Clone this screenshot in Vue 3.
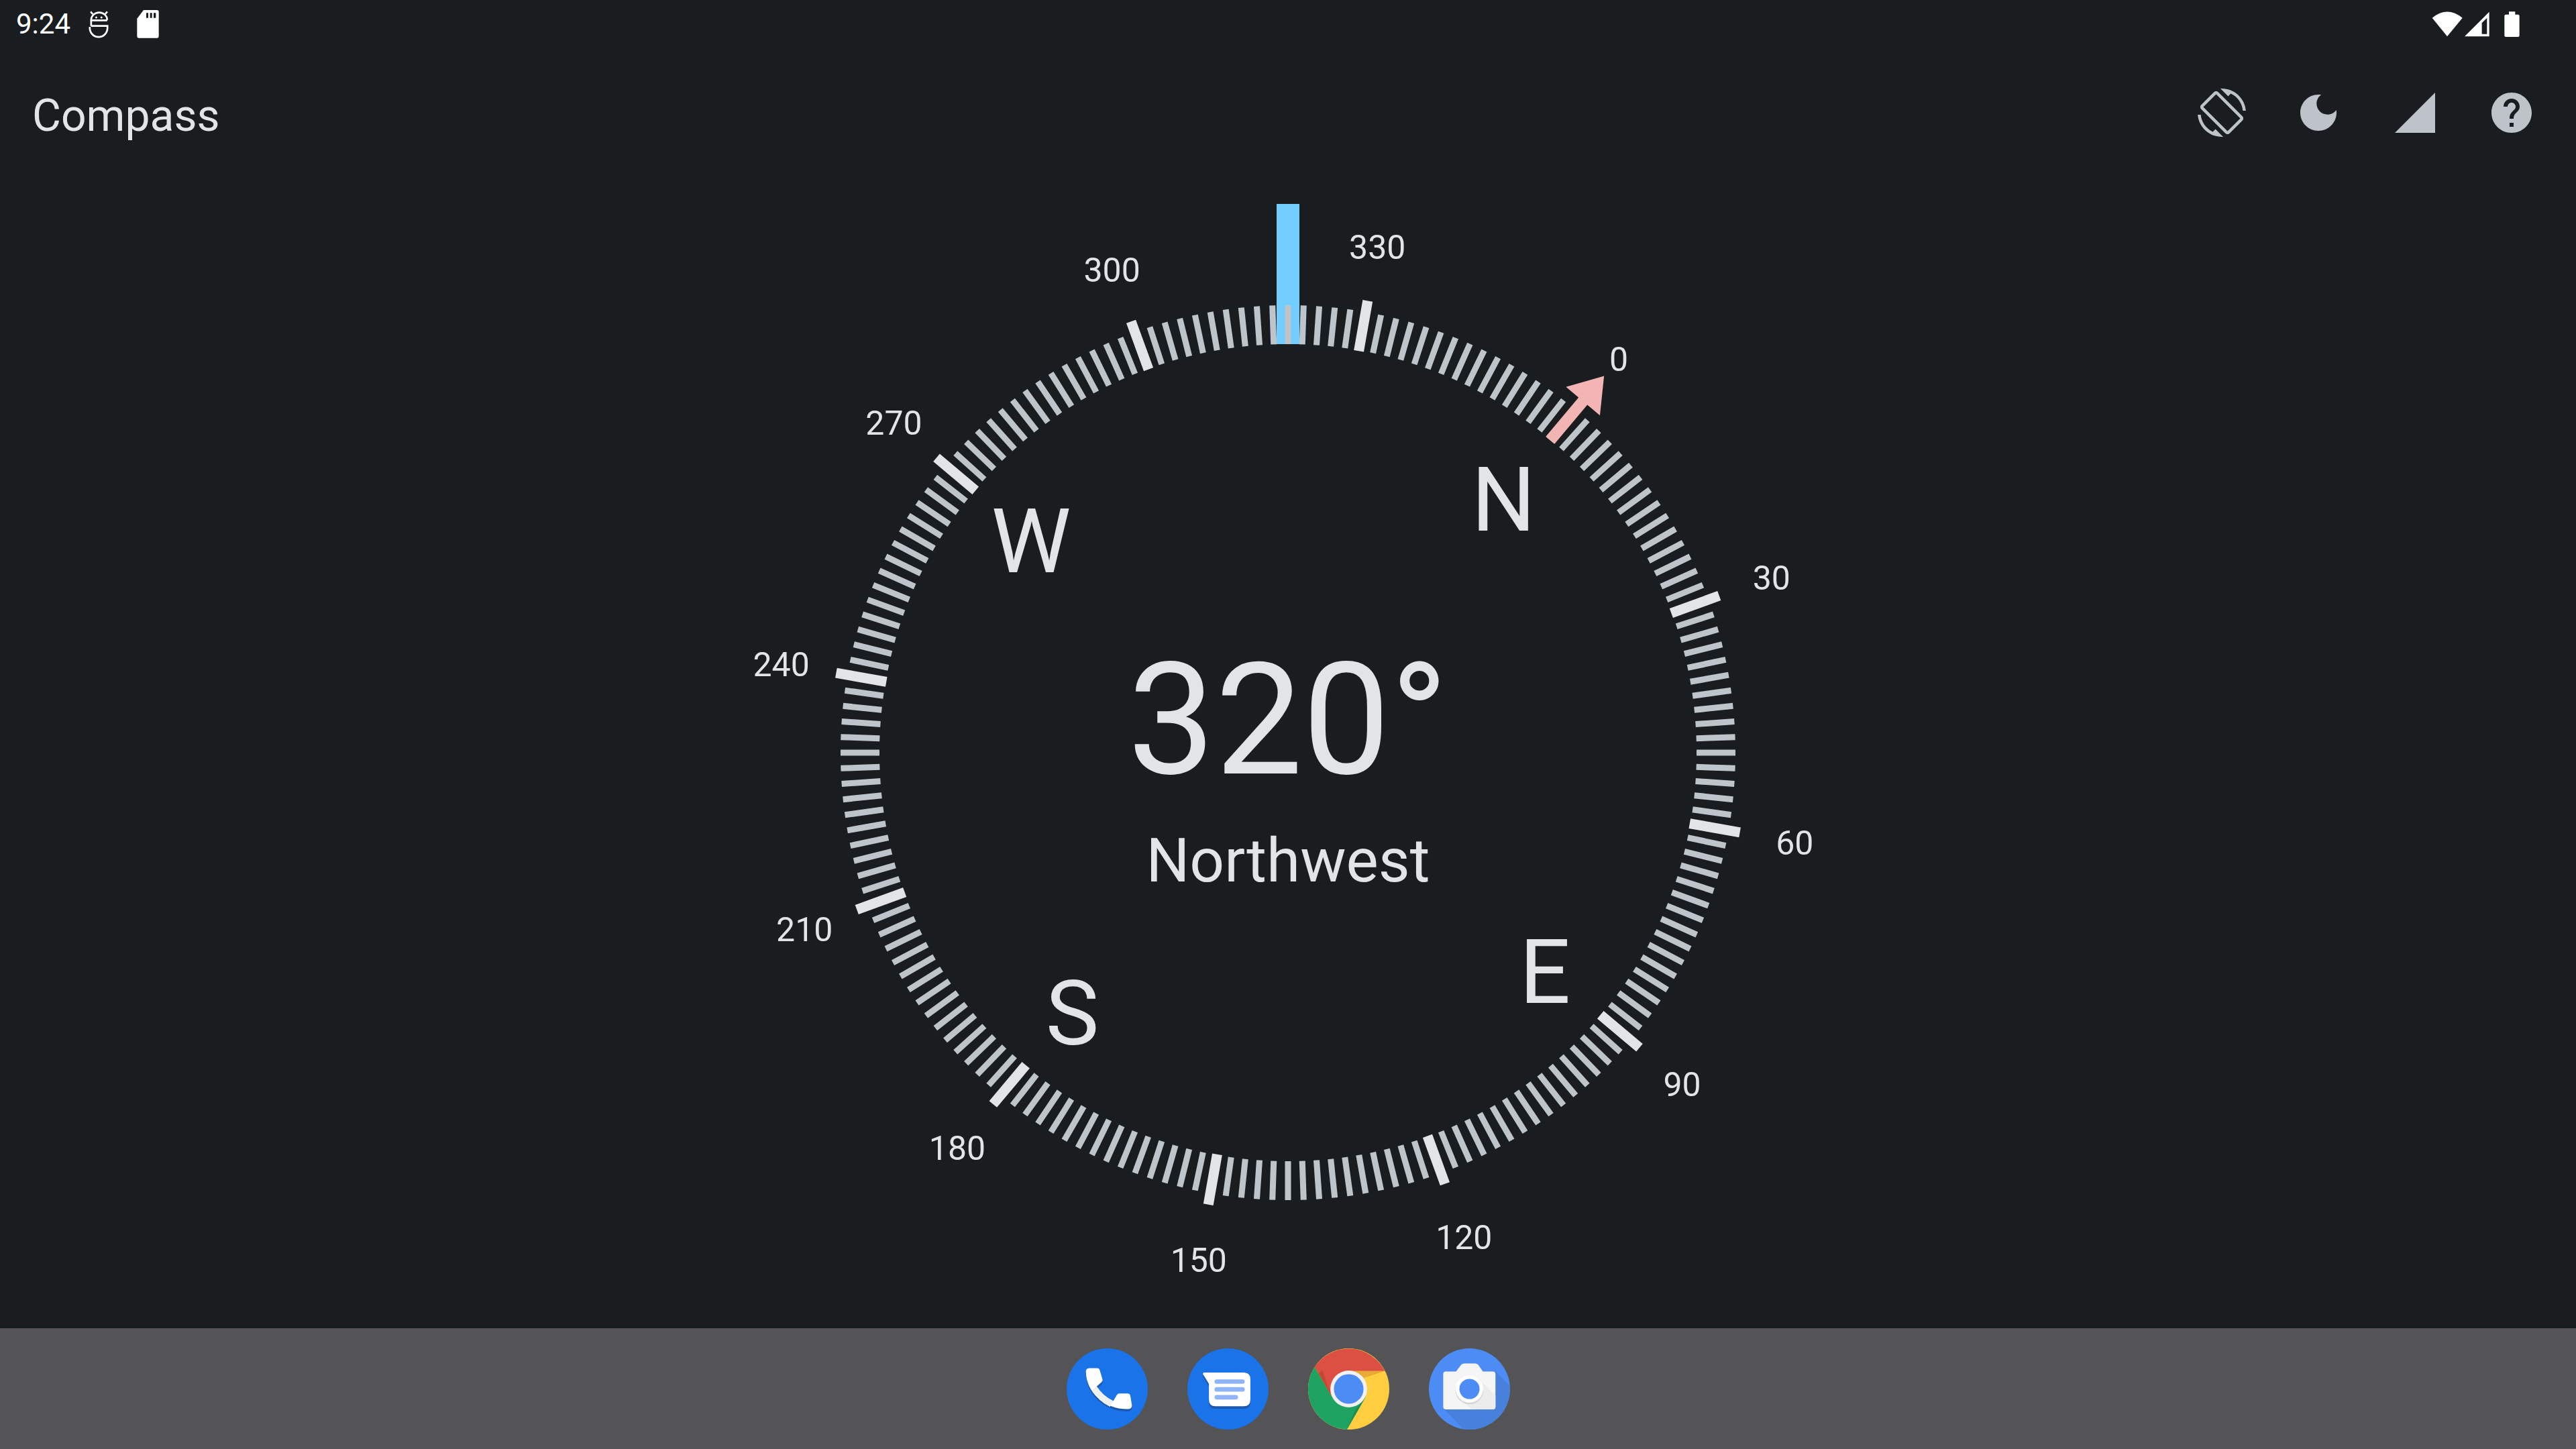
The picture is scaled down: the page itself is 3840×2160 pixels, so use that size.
<script setup>
import { computed } from 'vue'

const heading = 320
const toScreen = (deg) => deg - heading

const ticks = computed(() => {
  const list = []
  for (let d = 0; d < 360; d += 2) {
    const major = d % 30 === 0
    list.push({ deg: d, major, angle: toScreen(d) })
  }
  return list
})

function polar(deg, r) {
  const a = (toScreen(deg) * Math.PI) / 180
  return { x: Math.sin(a) * r, y: -Math.cos(a) * r }
}

const labels = computed(() => {
  const list = []
  for (let d = 0; d < 360; d += 30) {
    const p = polar(d, 767)
    list.push({ text: String(d), x: p.x, y: p.y + 19 })
  }
  return list
})

const letters = computed(() =>
  [['N', 0], ['E', 90], ['S', 180], ['W', 270]].map(([text, d]) => {
    const p = polar(d, 500)
    return { text, x: p.x, y: p.y + 52 }
  })
)
</script>

<template>
  <div class="screen">
    <header class="status">
      <div class="status-left">
        <span class="time">9:24</span>
        <svg class="bug" viewBox="24 24 92 126" fill="none" stroke="#fff" stroke-width="8">
          <path d="M107 70H35M35 95V68A36 33 0 0 1 107 68M35 95H108V104A39 40 0 0 1 29 104V99M33 31l9 11M107 31l-9 11" />
          <circle cx="58" cy="57" r="4.5" fill="#fff" stroke="none" />
          <circle cx="81" cy="57" r="4.5" fill="#fff" stroke="none" />
        </svg>
        <svg class="sd" viewBox="235 22 99 126">
          <path fill="#fff" d="M265 22H325Q333 22 333 30V138Q333 147 325 147H244Q236 147 236 138V60Z" />
          <path fill="#1a1d20" d="M277 35h9v22h-9zM294 35h9v22h-9zM310 35h10v22h-10z" />
        </svg>
      </div>
      <div class="status-right">
        <svg class="wifi" viewBox="28 26 140 114">
          <path fill="#fff" d="M30 55Q97 0 165 55L97 138Z" />
        </svg>
        <svg class="cell" viewBox="178 26 112 114">
          <path fill="#fff" fill-rule="evenodd" d="M178 138L288 28V138ZM255 78V127H278V55Z" />
        </svg>
        <svg class="battery" viewBox="354 24 70 116">
          <path fill="#fff" d="M375 25H403V38H416Q422 38 422 44V132Q422 138 416 138H361Q355 138 355 132V44Q355 38 361 38H375Z" />
        </svg>
      </div>
    </header>

    <div class="toolbar">
      <div class="title">Compass</div>
      <div class="actions">
        <div class="action">
          <svg viewBox="0 0 24 24"><path d="M16.48 2.52c3.27 1.55 5.61 4.72 5.97 8.48h1.5C23.44 4.84 18.29 0 12 0l-.66.03 3.81 3.81 1.33-1.32zm-6.25-.77c-.59-.59-1.54-.59-2.12 0L1.75 8.11c-.59.59-.59 1.54 0 2.12l12.02 12.02c.59.59 1.54.59 2.12 0l6.36-6.36c.59-.59.59-1.54 0-2.12L10.23 1.75zm4.6 19.44L2.81 9.17l6.36-6.36 12.02 12.02-6.36 6.36zm-7.31.29C4.25 19.94 1.91 16.76 1.55 13H.05C.56 19.16 5.71 24 12 24l.66-.03-3.81-3.81-1.33 1.32z" /></svg>
        </div>
        <div class="action">
          <svg viewBox="0 0 24 24"><path d="M12 3c-4.97 0-9 4.03-9 9s4.03 9 9 9 9-4.03 9-9c0-.46-.04-.92-.1-1.36-.98 1.37-2.58 2.26-4.4 2.26-2.98 0-5.4-2.42-5.4-5.4 0-1.81.89-3.42 2.26-4.4-.44-.06-.9-.1-1.36-.1z" /></svg>
        </div>
        <div class="action">
          <svg viewBox="0 0 24 24"><path d="M2 22h20V2z" /></svg>
        </div>
        <div class="action">
          <svg viewBox="0 0 24 24"><path d="M12 2C6.48 2 2 6.48 2 12s4.48 10 10 10 10-4.48 10-10S17.52 2 12 2zm1 17h-2v-2h2v2zm2.07-7.75l-.9.92C13.45 12.9 13 13.5 13 15h-2v-.5c0-1.1.45-2.1 1.17-2.83l1.24-1.26c.37-.36.59-.86.59-1.41 0-1.1-.9-2-2-2s-2 .9-2 2H8c0-2.21 1.79-4 4-4s4 1.79 4 4c0 .88-.36 1.68-.93 2.25z" /></svg>
        </div>
      </div>
    </div>

    <main class="main">
      <svg class="dial" viewBox="-858 -858 1716 1716">
        <rect x="-17" y="-818" width="34" height="209" fill="#73cdff" />
        <rect
          v-for="t in ticks"
          :key="t.deg"
          :x="t.major ? -7.5 : -4.5"
          :y="t.major ? -684 : -667"
          :width="t.major ? 15 : 9"
          :height="t.major ? 76 : 58"
          :fill="t.major ? '#e3e4e6' : '#bdc5cb'"
          :transform="`rotate(${t.angle})`"
        />
        <polygon
          points="-8.5,-608 -8.5,-684 -33,-684 0,-733 33,-684 8.5,-684 8.5,-608"
          fill="#f2b5b3"
          transform="rotate(40)"
        />
        <text v-for="l in labels" :key="l.text" class="label" :x="l.x" :y="l.y">{{ l.text }}</text>
        <text v-for="l in letters" :key="l.text" class="letter" :x="l.x" :y="l.y">{{ l.text }}</text>
        <text class="bearing" x="0" y="31">320°</text>
        <text class="direction" x="0" y="192">Northwest</text>
      </svg>
    </main>

    <footer class="dock">
      <svg class="app" viewBox="14 27 362 362">
        <circle cx="195" cy="208" r="181" fill="#1a73e8" />
        <path fill="#1c58ad" transform="translate(0 10)" d="M118 115H150Q160 115 162 125L174 165Q176 172 170 177L148 197Q176 240 222 262L238 235Q241 228 250 228H285Q296 228 298 238L305 278Q307 298 285 298C180 298 100 220 100 130Q100 115 118 115Z" />
        <path fill="#fff" d="M118 115H150Q160 115 162 125L174 165Q176 172 170 177L148 197Q176 240 222 262L238 235Q241 228 250 228H285Q296 228 298 238L305 278Q307 298 285 298C180 298 100 220 100 130Q100 115 118 115Z" />
        <path fill="#eff0f2" d="M127 213L148 197Q176 240 222 262L207 287Q155 262 127 213Z" />
      </svg>
      <svg class="app" viewBox="554 27 362 362">
        <circle cx="735" cy="208" r="181" fill="#1a73e8" />
        <path fill="#1c58ad" transform="translate(0 11)" d="M630 135H805Q835 135 835 165V255Q835 285 805 285H680Q650 285 650 255V185L624 143Q622 135 630 135Z" />
        <path fill="#fff" d="M630 135H805Q835 135 835 165V255Q835 285 805 285H680Q650 285 650 255V185L624 143Q622 135 630 135Z" />
        <rect x="675" y="165" width="135" height="20" rx="10" fill="#8fb5f8" />
        <rect x="675" y="200" width="135" height="20" rx="10" fill="#8fb5f8" />
        <rect x="675" y="235" width="105" height="20" rx="10" fill="#8fb5f8" />
      </svg>
      <svg class="app" viewBox="14 27 362 362">
        <circle cx="195" cy="208" r="181" fill="#ffcd40" />
        <path fill="#dc4f43" d="M43 110A181 181 0 0 1 356 128H195L118 240Z" />
        <path fill="#1ea362" d="M43 110A181 181 0 0 0 187 389L270 245L195 208L118 240Z" />
        <path fill="#b8432f" opacity=".6" d="M78 125L118 240L60 140Z" />
        <path fill="#e3a233" opacity=".8" d="M215 128H356L245 165Z" />
        <path fill="#15804c" opacity=".6" d="M187 389L270 245L225 300Z" />
        <circle cx="195" cy="208" r="82" fill="#f1f1f1" />
        <circle cx="195" cy="208" r="66" fill="#4e8cf5" />
      </svg>
      <svg class="app" viewBox="554 27 362 362">
        <clipPath id="cam-clip"><circle cx="735" cy="208" r="181" /></clipPath>
        <circle cx="735" cy="208" r="181" fill="#4e8cf5" />
        <path fill="#4781dc" clip-path="url(#cam-clip)" d="M851 130L940 220V400H720L620 295Z" />
        <path fill="#f5f5f5" d="M675 130L698 100Q703 94 712 94H760Q769 94 774 100L795 130H839Q851 130 851 142V287Q851 299 839 299H630Q618 299 618 287V142Q618 130 630 130Z" />
        <path fill="#ececec" d="M785 172L851 238V287Q851 299 839 299H745L692 250Z" />
        <circle cx="735" cy="214" r="62" fill="#c9c9c9" opacity=".7" />
        <circle cx="735" cy="208" r="61" fill="#fff" />
        <circle cx="735" cy="208" r="45" fill="#4e8cf5" />
      </svg>
    </footer>
  </div>
</template>

<style>
html,
body {
  margin: 0;
  background: #1a1d20;
}
</style>

<style scoped>
.screen {
  width: 3840px;
  height: 2160px;
  display: flex;
  flex-direction: column;
  background: #1a1d20;
  font-family: Roboto, "Liberation Sans", sans-serif;
  color: #e3e4e6;
  overflow: hidden;
}

.status {
  height: 72px;
  flex: none;
  display: flex;
  align-items: center;
  justify-content: space-between;
  padding: 0 84px 0 24px;
}
.status-left,
.status-right {
  display: flex;
  align-items: center;
}
.time {
  font-size: 42px;
  color: #fff;
  line-height: 72px;
}
.bug {
  width: 31px;
  height: 42px;
  margin-left: 27px;
}
.sd {
  width: 33px;
  height: 42px;
  margin-left: 41px;
}
.wifi {
  width: 46.7px;
  height: 38px;
}
.cell {
  width: 37.3px;
  height: 38px;
  margin-left: 2.7px;
}
.battery {
  width: 23.3px;
  height: 38.7px;
  margin-left: 21.4px;
}

.toolbar {
  height: 192px;
  flex: none;
  display: flex;
  align-items: center;
  justify-content: space-between;
  padding: 0 24px 0 48px;
}
.title {
  font-size: 66px;
  padding-top: 8px;
}
.actions {
  display: flex;
}
.action {
  width: 144px;
  height: 144px;
  display: flex;
  align-items: center;
  justify-content: center;
}
.action svg {
  width: 72px;
  height: 72px;
  fill: #bdc3c9;
}

.main {
  flex: 1;
  min-height: 0;
  display: flex;
  justify-content: center;
  align-items: center;
}
.dial {
  width: 1716px;
  height: 1716px;
}
.label,
.letter,
.bearing,
.direction {
  fill: #e3e4e6;
  text-anchor: middle;
  font-family: Roboto, "Liberation Sans", sans-serif;
}
.label {
  font-size: 50px;
}
.letter {
  font-size: 134px;
}
.bearing {
  font-size: 232px;
}
.direction {
  font-size: 91px;
}

.dock {
  height: 180px;
  flex: none;
  display: flex;
  justify-content: center;
  align-items: center;
  gap: 59px;
  background: #545456;
}
.app {
  width: 121px;
  height: 121px;
}
</style>
